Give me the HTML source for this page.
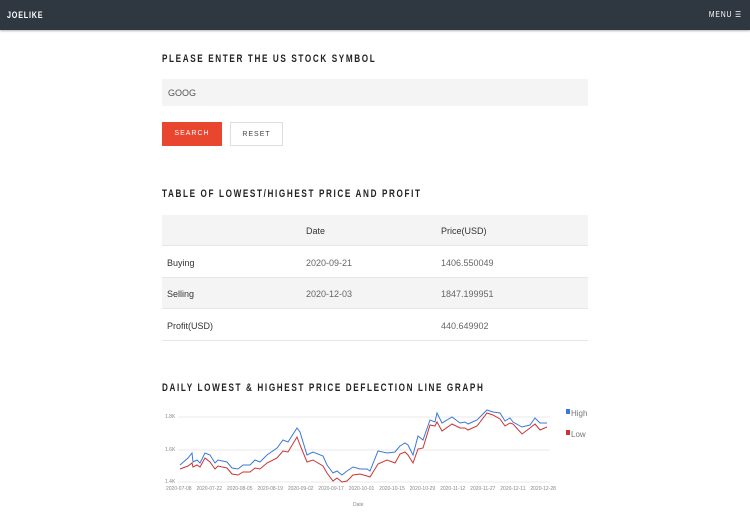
<!DOCTYPE html>
<html><head><style>
*{margin:0;padding:0;box-sizing:border-box}
body{width:750px;height:530px;background:#fff;font-family:"Liberation Sans Narrow","Liberation Sans",sans-serif;color:#333;position:relative;overflow:hidden}
.nav{position:absolute;left:0;top:0;width:750px;height:30px;background:#2f3741;box-shadow:0 1px 2px rgba(0,0,0,.3)}
.logo{position:absolute;left:7px;top:10px;color:#fff;font-weight:bold;font-size:9px;letter-spacing:1px;transform:scaleX(.8);transform-origin:left}
.menu{position:absolute;right:8px;top:10px;color:#fff;font-size:8px;letter-spacing:1px;transform:scaleX(.85);transform-origin:right}
h2{position:absolute;left:162px;font-size:11px;font-weight:bold;letter-spacing:2.2px;color:#222;transform:scaleX(.74);transform-origin:left;white-space:nowrap}
.in{position:absolute;left:162px;top:79px;width:426px;height:27px;background:#f4f4f4;font-size:9px;padding:9px 0 0 6px;color:#555}
.btn{position:absolute;top:122px;height:24px;font-size:7px;letter-spacing:1px;text-align:center;line-height:24px}
.t{position:absolute;left:162px;width:426px;font-size:9px}
.r{position:absolute;left:0;width:426px;height:31px;border-bottom:1px solid #e6e6e6}
.r span{position:absolute;top:11px}
.c1{left:5px;color:#333}.c2{left:144px;color:#666}.c3{left:279px;color:#666}
.ax{position:absolute;font-size:5px;color:#888;font-family:"Liberation Sans",sans-serif}
.xl{position:absolute;left:166px;top:486px;width:390px;display:flex;justify-content:space-between;font-size:5px;color:#888;font-family:"Liberation Sans",sans-serif}
</style></head><body>
<div class="nav"><div class="logo">JOELIKE</div><div class="menu">MENU ☰</div></div>
<h2 style="top:53px">PLEASE ENTER THE US STOCK SYMBOL</h2>
<div class="in">GOOG</div>
<div class="btn" style="left:162px;width:60px;background:#e9462f;color:#fff">SEARCH</div>
<div class="btn" style="left:230px;width:53px;border:1px solid #ddd;color:#444">RESET</div>
<h2 style="top:188px">TABLE OF LOWEST/HIGHEST PRICE AND PROFIT</h2>
<div class="t" style="top:215px">
<div class="r" style="top:0;background:#f4f4f4"><span class="c2" style="color:#333">Date</span><span class="c3" style="color:#333">Price(USD)</span></div>
<div class="r" style="top:32px"><span class="c1">Buying</span><span class="c2">2020-09-21</span><span class="c3">1406.550049</span></div>
<div class="r" style="top:63px;background:#f4f4f4"><span class="c1">Selling</span><span class="c2">2020-12-03</span><span class="c3">1847.199951</span></div>
<div class="r" style="top:95px"><span class="c1">Profit(USD)</span><span class="c3">440.649902</span></div>
</div>
<h2 style="top:382px">DAILY LOWEST &amp; HIGHEST PRICE DEFLECTION LINE GRAPH</h2>
<svg style="position:absolute;left:0;top:0" width="750" height="530">
<g stroke="#e8e8e8" stroke-width="1"><line x1="178" y1="417" x2="550" y2="417"/><line x1="178" y1="450" x2="550" y2="450"/><line x1="178" y1="482" x2="550" y2="482"/></g>
<polyline fill="none" stroke="#3b78d8" stroke-width="1" points="180,465 188,458 192,453 193,462 197,460 200,463 205,453 210,455 215,463 218,460 227,462 232,468 238,469 243,465 250,465 255,460 260,462 267,455 277,448 283,440 288,442 297,428 300,432 307,455 313,452 323,456 327,465 333,473 337,471 342,475 347,471 353,467 360,469 367,469 370,471 378,451 387,453 395,452 400,446 405,443 408,445 413,455 418,436 423,440 430,420 435,422 437,413 442,423 452,417 460,423 465,422 468,424 477,420 487,410 493,412 500,413 505,421 510,418 513,422 522,427 530,425 535,418 540,423 547,423"/>
<polyline fill="none" stroke="#cc3333" stroke-width="1" points="180,469 188,466 192,463 193,467 197,465 200,467 205,458 210,462 215,469 218,466 227,468 232,474 238,475 243,472 250,472 255,468 260,469 267,463 277,458 283,451 288,452 297,437 300,445 307,462 313,460 323,466 327,473 333,481 337,478 342,482 347,481 353,475 360,474 367,476 370,477 378,464 387,460 395,463 400,454 405,452 408,455 413,463 418,449 423,448 430,425 435,426 437,422 442,431 452,424 460,428 465,428 468,430 477,426 487,413 493,415 500,419 505,426 510,423 513,424 522,434 530,428 535,424 540,430 547,427"/>
<rect x="566" y="409" width="4" height="5" fill="#3b78d8"/><rect x="566" y="430" width="4" height="5" fill="#cc3333"/>
</svg>
<div class="ax" style="left:165px;top:414px">1.8K</div>
<div class="ax" style="left:165px;top:447px">1.6K</div>
<div class="ax" style="left:165px;top:479px">1.4K</div>
<div class="ax" style="left:571px;top:409px;font-size:8px;color:#777">High</div>
<div class="ax" style="left:571px;top:430px;font-size:8px;color:#777">Low</div>
<div class="xl"><span>2020-07-08</span><span>2020-07-22</span><span>2020-08-05</span><span>2020-08-19</span><span>2020-09-02</span><span>2020-09-17</span><span>2020-10-01</span><span>2020-10-15</span><span>2020-10-29</span><span>2020-11-12</span><span>2020-11-27</span><span>2020-12-11</span><span>2020-12-28</span></div>
<div class="ax" style="left:353px;top:502px">Date</div>
</body></html>
